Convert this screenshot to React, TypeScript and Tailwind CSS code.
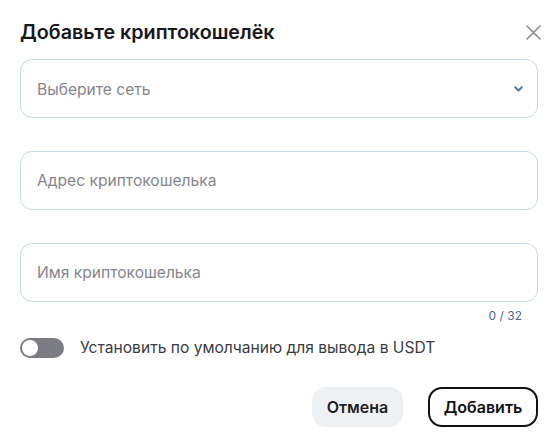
import { useState } from "react";

export default function App() {
  const [name, setName] = useState("");
  const [isDefault, setIsDefault] = useState(false);

  const inputBox =
    "h-[59px] w-full rounded-[12px] border border-[#c3dbe9] bg-white px-4 text-[15.6px] text-[#2b2b30] placeholder:text-[#86868e] outline-none";

  return (
    <div className="h-[448px] w-[559px] bg-white font-['Inter',sans-serif] pl-5 pr-[21px] pt-[21px]">
      <div className="flex items-center justify-between">
        <h2 className="text-[19.7px] font-semibold leading-[23px] text-[#18181b]">Добавьте криптокошелёк</h2>
        <button className="mr-[-5px] flex h-5 w-5 items-center justify-center text-[#8a8a8f]">
          <svg width="15" height="15" viewBox="0 0 15 15" fill="none" stroke="currentColor" strokeWidth="1.6" strokeLinecap="round">
            <path d="M1 1L14 14M14 1L1 14" />
          </svg>
        </button>
      </div>

      <div className="mt-[15px] flex h-[59px] items-center justify-between rounded-[12px] border border-[#c3dbe9] pl-4 pr-[14px]">
        <span className="pt-[2px] text-[15.6px] text-[#86868e]">Выберите сеть</span>
        <svg width="9" height="6" viewBox="0 0 9 6" fill="none" stroke="#4f7d9b" strokeWidth="2" strokeLinecap="round" strokeLinejoin="round">
          <path d="M1.2 1.2L4.5 4.5L7.8 1.2" />
        </svg>
      </div>

      <input className={`${inputBox} mt-[33px] block`} placeholder="Адрес криптокошелька" />

      <input
        className={`${inputBox} mt-[33px] block`}
        placeholder="Имя криптокошелька"
        maxLength={32}
        value={name}
        onChange={e => setName(e.target.value)}
      />
      <div className="mt-[6px] pr-[16px] text-right text-[12px] leading-[15px] text-[#4c6a84]">{name.length} / 32</div>

      <label className="mt-[13px] flex cursor-pointer items-center gap-4">
        <button
          type="button"
          onClick={() => setIsDefault(!isDefault)}
          className={`flex h-5 w-11 items-center rounded-full p-[2px] ${isDefault ? "justify-end bg-[#18181b]" : "bg-[#7b7b84]"}`}
        >
          <span className="h-4 w-4 rounded-full bg-white" />
        </button>
        <span className="text-[15.6px] text-[#3b3b41]">Установить по умолчанию для вывода в USDT</span>
      </label>

      <div className="mt-[28px] flex justify-end gap-[25px]">
        <button className="h-[40px] w-[91px] rounded-[14px] bg-[#eef1f4] text-[16px] font-semibold text-[#1e1e22]">Отмена</button>
        <button className="h-[40px] w-[110px] rounded-[14px] border-2 border-[#111114] bg-white text-[16px] font-semibold text-[#111114]">Добавить</button>
      </div>
    </div>
  );
}
